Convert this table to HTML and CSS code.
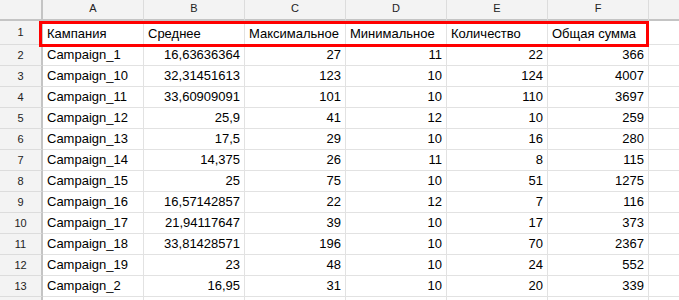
FILE: index.html
```html
<!DOCTYPE html>
<html>
<head>
<meta charset="utf-8">
<link rel="stylesheet" href="styles.css">
</head>
<body>
<div class="sheet">
  <div class="row head">
    <div class="c rh corner"></div>
    <div class="c ch">A</div><div class="c ch">B</div><div class="c ch">C</div><div class="c ch">D</div><div class="c ch">E</div><div class="c ch">F</div><div class="c ch last"></div>
  </div>
  <div class="row first">
    <div class="c rh">1</div>
    <div class="c">Кампания</div><div class="c">Среднее</div><div class="c">Максимальное</div><div class="c">Минимальное</div><div class="c">Количество</div><div class="c">Общая сумма</div><div class="c last"></div>
  </div>
  <div class="row"><div class="c rh">2</div><div class="c">Campaign_1</div><div class="c n">16,63636364</div><div class="c n">27</div><div class="c n">11</div><div class="c n">22</div><div class="c n">366</div><div class="c last"></div></div>
  <div class="row"><div class="c rh">3</div><div class="c">Campaign_10</div><div class="c n">32,31451613</div><div class="c n">123</div><div class="c n">10</div><div class="c n">124</div><div class="c n">4007</div><div class="c last"></div></div>
  <div class="row"><div class="c rh">4</div><div class="c">Campaign_11</div><div class="c n">33,60909091</div><div class="c n">101</div><div class="c n">10</div><div class="c n">110</div><div class="c n">3697</div><div class="c last"></div></div>
  <div class="row"><div class="c rh">5</div><div class="c">Campaign_12</div><div class="c n">25,9</div><div class="c n">41</div><div class="c n">12</div><div class="c n">10</div><div class="c n">259</div><div class="c last"></div></div>
  <div class="row"><div class="c rh">6</div><div class="c">Campaign_13</div><div class="c n">17,5</div><div class="c n">29</div><div class="c n">10</div><div class="c n">16</div><div class="c n">280</div><div class="c last"></div></div>
  <div class="row"><div class="c rh">7</div><div class="c">Campaign_14</div><div class="c n">14,375</div><div class="c n">26</div><div class="c n">11</div><div class="c n">8</div><div class="c n">115</div><div class="c last"></div></div>
  <div class="row"><div class="c rh">8</div><div class="c">Campaign_15</div><div class="c n">25</div><div class="c n">75</div><div class="c n">10</div><div class="c n">51</div><div class="c n">1275</div><div class="c last"></div></div>
  <div class="row"><div class="c rh">9</div><div class="c">Campaign_16</div><div class="c n">16,57142857</div><div class="c n">22</div><div class="c n">12</div><div class="c n">7</div><div class="c n">116</div><div class="c last"></div></div>
  <div class="row"><div class="c rh">10</div><div class="c">Campaign_17</div><div class="c n">21,94117647</div><div class="c n">39</div><div class="c n">10</div><div class="c n">17</div><div class="c n">373</div><div class="c last"></div></div>
  <div class="row"><div class="c rh">11</div><div class="c">Campaign_18</div><div class="c n">33,81428571</div><div class="c n">196</div><div class="c n">10</div><div class="c n">70</div><div class="c n">2367</div><div class="c last"></div></div>
  <div class="row"><div class="c rh">12</div><div class="c">Campaign_19</div><div class="c n">23</div><div class="c n">48</div><div class="c n">10</div><div class="c n">24</div><div class="c n">552</div><div class="c last"></div></div>
  <div class="row"><div class="c rh">13</div><div class="c">Campaign_2</div><div class="c n">16,95</div><div class="c n">31</div><div class="c n">10</div><div class="c n">20</div><div class="c n">339</div><div class="c last"></div></div>
  <div class="row stub"><div class="c rh"></div><div class="c"></div><div class="c"></div><div class="c"></div><div class="c"></div><div class="c"></div><div class="c"></div><div class="c last"></div></div>
  <div class="highlight"></div>
</div>
</body>
</html>
```
FILE: styles.css
```css
* { box-sizing: border-box; }
html, body { margin: 0; padding: 0; background: #fff; }
body { width: 679px; height: 300px; overflow: hidden; font-family: "Liberation Sans", Arial, sans-serif; }
.sheet { position: relative; width: 679px; height: 300px; overflow: hidden; }
.row { display: grid; grid-template-columns: 43px repeat(6, 101px) 1fr; height: 21px; }
.row.first { height: 24px; }
.row.head { height: 21px; }
.row.stub { height: 3px; }
.c {
  border-right: 1px solid #e2e2e2;
  border-bottom: 1px solid #e2e2e2;
  font-size: 13px;
  color: #000;
  padding: 0 4px 3px 4px;
  display: flex;
  align-items: flex-end;
  white-space: nowrap;
  overflow: hidden;
  line-height: 15px;
}
.stub .c { border-bottom: none; padding: 0; }
.c.n { justify-content: flex-end; }
.c.last { border-right: none; }
.rh {
  background: #f3f3f3;
  justify-content: center;
  font-size: 11px;
  color: #222;
  border-right: 2px solid #c4c4c4;
  border-bottom: 1px solid #dcdcdc;
  align-items: center;
  padding: 0;
}
.head .c {
  background: #f3f3f3;
  border-bottom: 2px solid #c4c4c4;
  border-right-color: #dcdcdc;
  font-size: 11px;
  color: #222;
  justify-content: center;
  align-items: center;
  padding: 0 0 2px 0;
}
.head .rh { border-right: 2px solid #c4c4c4; }
.highlight {
  position: absolute;
  left: 39px;
  top: 21px;
  width: 610px;
  height: 26px;
  border: 3px solid #ff0000;
  pointer-events: none;
}
```
